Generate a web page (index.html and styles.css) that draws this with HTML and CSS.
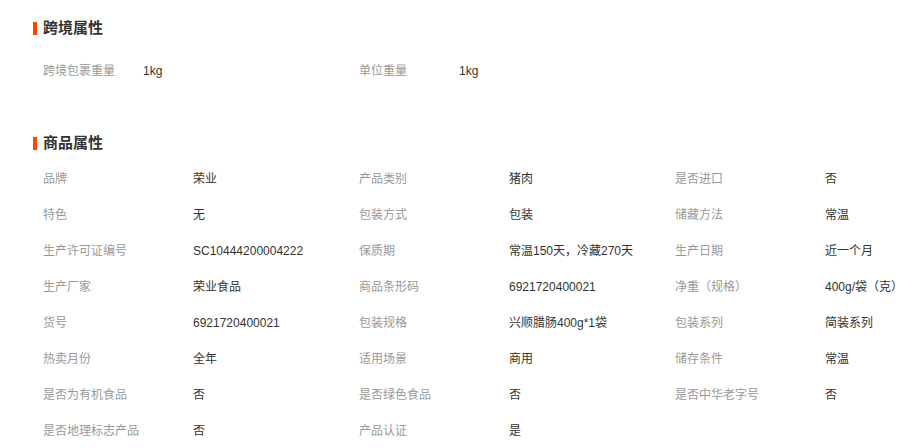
FILE: index.html
```html
<!DOCTYPE html>
<html>

<head>
  <meta charset="utf-8">
  <title>商品属性</title>
  <link rel="stylesheet" href="styles.css">
</head>

<body>
  <div class="attr-block">
    <h3 class="attr-title">跨境属性</h3>
    <ul class="attr-list cols-2">
      <li><span class="attr-name">跨境包裹重量</span><span class="attr-value">1kg</span></li>
      <li><span class="attr-name">单位重量</span><span class="attr-value">1kg</span></li>
    </ul>
  </div>

  <div class="attr-block goods">
    <h3 class="attr-title">商品属性</h3>
    <ul class="attr-list cols-3">
      <li><span class="attr-name">品牌</span><span class="attr-value">荣业</span></li>
      <li><span class="attr-name">产品类别</span><span class="attr-value">猪肉</span></li>
      <li><span class="attr-name">是否进口</span><span class="attr-value">否</span></li>
      <li><span class="attr-name">特色</span><span class="attr-value">无</span></li>
      <li><span class="attr-name">包装方式</span><span class="attr-value">包装</span></li>
      <li><span class="attr-name">储藏方法</span><span class="attr-value">常温</span></li>
      <li><span class="attr-name">生产许可证编号</span><span class="attr-value">SC10444200004222</span></li>
      <li><span class="attr-name">保质期</span><span class="attr-value">常温150天，冷藏270天</span></li>
      <li><span class="attr-name">生产日期</span><span class="attr-value">近一个月</span></li>
      <li><span class="attr-name">生产厂家</span><span class="attr-value">荣业食品</span></li>
      <li><span class="attr-name">商品条形码</span><span class="attr-value">6921720400021</span></li>
      <li><span class="attr-name">净重（规格）</span><span class="attr-value">400g/袋（克）</span></li>
      <li><span class="attr-name">货号</span><span class="attr-value">6921720400021</span></li>
      <li><span class="attr-name">包装规格</span><span class="attr-value">兴顺腊肠400g*1袋</span></li>
      <li><span class="attr-name">包装系列</span><span class="attr-value">简装系列</span></li>
      <li><span class="attr-name">热卖月份</span><span class="attr-value">全年</span></li>
      <li><span class="attr-name">适用场景</span><span class="attr-value">商用</span></li>
      <li><span class="attr-name">储存条件</span><span class="attr-value">常温</span></li>
      <li><span class="attr-name">是否为有机食品</span><span class="attr-value">否</span></li>
      <li><span class="attr-name">是否绿色食品</span><span class="attr-value">否</span></li>
      <li><span class="attr-name">是否中华老字号</span><span class="attr-value">否</span></li>
      <li><span class="attr-name">是否地理标志产品</span><span class="attr-value">否</span></li>
      <li><span class="attr-name">产品认证</span><span class="attr-value">是</span></li>
    </ul>
  </div>
</body>

</html>
```

FILE: styles.css
```css
body {
  margin: 0;
  padding: 18px 0 0 33px;
  background-color: #fff;
  font-family: 'Liberation Sans', 'Noto Sans CJK SC', sans-serif;
  font-size: 12px;
  color: #333;
  overflow: hidden;
}

.attr-title {
  margin: 0;
  height: 20px;
  line-height: 20px;
  font-size: 15px;
  font-weight: bold;
  color: #333;
  display: flex;
  align-items: center;
}

/* orange marker in front of the title */
.attr-title::before {
  content: "";
  width: 4px;
  height: 13px;
  margin-right: 6px;
  background-color: #ff4400;
}

.attr-list {
  list-style-type: none;
  margin: 0;
  padding: 0 0 0 10px;
  display: grid;
}

.attr-list li {
  display: flex;
  height: 36px;
  line-height: 36px;
  white-space: nowrap;
  overflow: hidden;
  min-width: 0;
}

.cols-2 {
  grid-template-columns: repeat(2, 316px);
  margin-top: 15px;
}

.cols-2 .attr-name {
  width: 100px;
}

.cols-3 {
  grid-template-columns: 316px 316px minmax(0, 1fr);
  margin-top: 8px;
}

.cols-3 .attr-name {
  width: 150px;
}

.attr-name {
  color: #999;
  flex-shrink: 0;
}

.attr-value {
  color: #333;
}

.goods {
  margin-top: 44px;
}
```
